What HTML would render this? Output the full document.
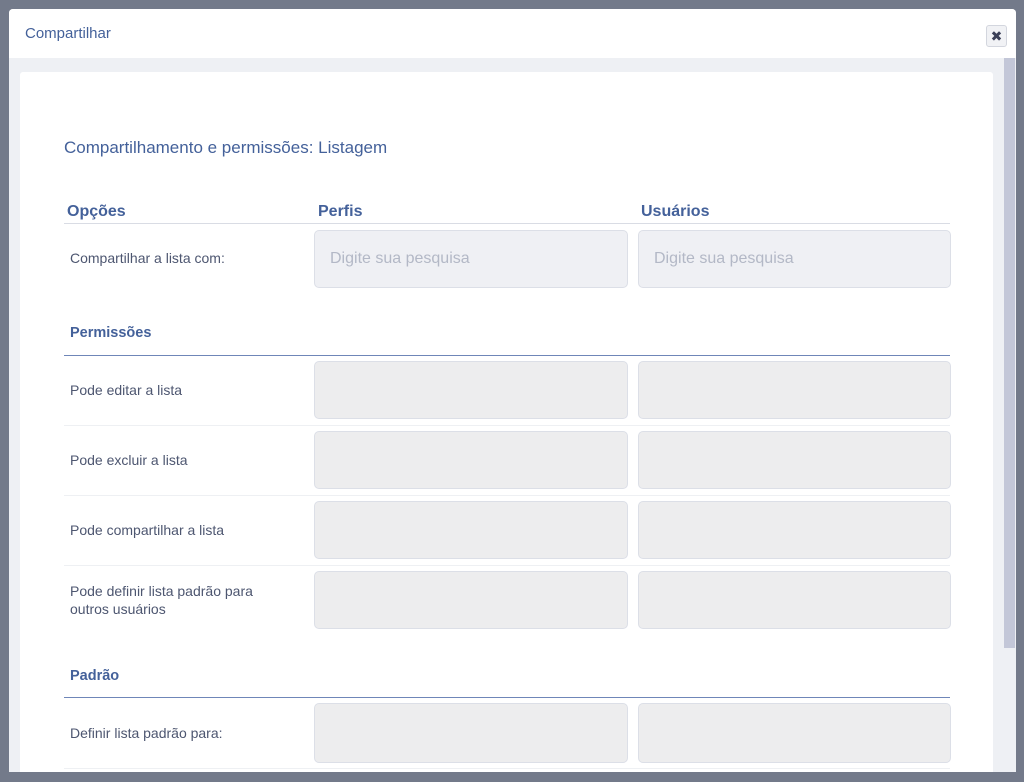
<!DOCTYPE html>
<html><head><meta charset="utf-8"><style>
*{box-sizing:border-box;margin:0;padding:0}
body{width:1024px;height:782px;overflow:hidden;background:#737a8a;font-family:"Liberation Sans","DejaVu Sans",sans-serif;position:relative}
.modal{position:absolute;left:9px;top:9px;width:1007px;height:763px;background:#eef0f4;border-radius:4px 4px 0 0;overflow:hidden}
.hdr{position:absolute;left:0;top:0;width:100%;height:49px;background:#fff}
.hdr .t{position:absolute;left:16px;top:16px;font-size:15px;color:#44619a}
.x{position:absolute;left:977px;top:16px;width:21px;height:22px;border:1px solid #d3d6de;border-radius:3px;background:#f1f2f5;color:#3b4058;font-size:14px;font-weight:bold;text-align:center;line-height:20px}
.card{position:absolute;left:11px;top:63px;width:973px;height:720px;background:#fff;border-radius:3px}
.sb{position:absolute;left:995px;top:49px;width:11px;height:590px;background:#c3c7d8}
.a{position:absolute}
.lbl{position:absolute;left:70px;font-size:14px;color:#4d5670;line-height:18px}
.h{position:absolute;font-size:16px;font-weight:bold;color:#44619a}
.sec{position:absolute;left:70px;font-size:14.5px;font-weight:bold;color:#44619a}
.in{position:absolute;height:58px;background:#ededee;border:1px solid #dcdfe7;border-radius:5px}
.in1{left:314px;width:314px}.in2{left:638px;width:313px}
.ph{background:#eff0f4;font-size:16px;color:#b3b8c6;padding:19px 0 0 15px}
.line{position:absolute;left:64px;width:886px;height:1px}
</style></head><body>
<div class="modal">
<div class="hdr"><div class="t">Compartilhar</div><div class="x">✖</div></div>
<div class="card"></div>
<div class="sb"></div>
</div>
<div class="a" style="left:64px;top:138px;font-size:17px;color:#44619a">Compartilhamento e permissões: Listagem</div>
<div class="h" style="left:67px;top:203px">Opções</div>
<div class="h" style="left:318px;top:203px">Perfis</div>
<div class="h" style="left:641px;top:203px">Usuários</div>
<div class="line" style="top:223px;background:#d9dce4"></div>
<div class="lbl" style="top:249px">Compartilhar a lista com:</div>
<div class="in in1 ph" style="top:230px">Digite sua pesquisa</div>
<div class="in in2 ph" style="top:230px">Digite sua pesquisa</div>
<div class="sec" style="top:325px">Permissões</div>
<div class="line" style="top:355px;background:#6f86b8"></div>
<div class="lbl" style="top:381px">Pode editar a lista</div>
<div class="in in1" style="top:361px"></div><div class="in in2" style="top:361px"></div>
<div class="line" style="top:425px;background:#eef0f3"></div>
<div class="lbl" style="top:451px">Pode excluir a lista</div>
<div class="in in1" style="top:431px"></div><div class="in in2" style="top:431px"></div>
<div class="line" style="top:495px;background:#eef0f3"></div>
<div class="lbl" style="top:521px">Pode compartilhar a lista</div>
<div class="in in1" style="top:501px"></div><div class="in in2" style="top:501px"></div>
<div class="line" style="top:565px;background:#eef0f3"></div>
<div class="lbl" style="top:582px">Pode definir lista padrão para<br>outros usuários</div>
<div class="in in1" style="top:571px"></div><div class="in in2" style="top:571px"></div>
<div class="sec" style="top:668px">Padrão</div>
<div class="line" style="top:697px;background:#6f86b8"></div>
<div class="lbl" style="top:724px">Definir lista padrão para:</div>
<div class="in in1" style="top:703px;height:60px"></div><div class="in in2" style="top:703px;height:60px"></div>
<div class="line" style="top:768px;background:#eef0f3"></div>
<div class="a" style="left:0;top:772px;width:1024px;height:10px;background:#737a8a"></div>
</body></html>
